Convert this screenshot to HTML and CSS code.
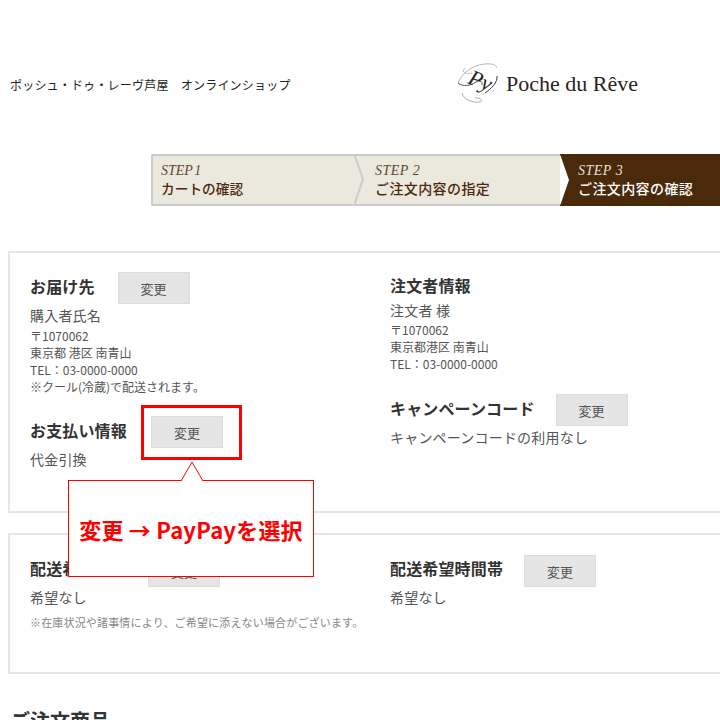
FILE: index.html
```html
<!DOCTYPE html>
<html lang="ja">
<head>
    <meta charset="UTF-8">
    <meta name="viewport" content="width=device-width, initial-scale=1.0">
    <title>ご注文内容の確認</title>
    <link rel="stylesheet" href="styles.css">
</head>
<body>
<div class="page">

    <!-- ヘッダー -->
    <header class="site-header">
        <p class="shop-name">ポッシュ・ドゥ・レーヴ芦屋　オンラインショップ</p>
        <div class="logo">
            <svg class="logo-mark" viewBox="0 0 40 40" width="40" height="40">
                <path d="M0 20 C4 10 14 2 27 1 C35 0 40 3 38 5" fill="none" stroke="#888" stroke-width="0.6"/>
                <path d="M0 20 C5 24 12 23 18 19 C22 17 25 19 24 22" fill="none" stroke="#444" stroke-width="0.9"/>
                <path d="M7 5 C3 9 7 12 14 10" fill="none" stroke="#999" stroke-width="0.6"/>
                <path d="M39 13 C40 19 33 26 27 30" fill="none" stroke="#333" stroke-width="1"/>
                <path d="M4 30 C5 36 14 40 22 39 C26 38 22 34 17 35" fill="none" stroke="#777" stroke-width="0.6"/>
                <text class="logo-letters" x="9" y="20" transform="rotate(22 9 20)">Py</text>
            </svg>
            <span class="logo-text">Poche du Rêve</span>
        </div>
    </header>

    <!-- ステップ -->
    <ol class="steps">
        <li class="step step-first">
            <span class="step-no">STEP 1</span>
            <span class="step-label">カートの確認</span>
            <svg class="step-chevron" viewBox="0 0 10 52" width="10" height="52"><polyline points="0,0 9,25 0,52" fill="none" stroke="#ccc" stroke-width="2"/></svg>
        </li>
        <li class="step step-second">
            <span class="step-no">STEP 2</span>
            <span class="step-label">ご注文内容の指定</span>
        </li>
        <li class="step step-current">
            <span class="step-no">STEP 3</span>
            <span class="step-label">ご注文内容の確認</span>
        </li>
    </ol>

    <!-- お届け先など -->
    <section class="card card-address">
        <div class="col">
            <div class="head-row head-row-ship">
                <h2>お届け先</h2>
                <button class="change-btn">変更</button>
            </div>
            <p class="name">購入者氏名</p>
            <p class="small">〒1070062<br>東京都 港区 南青山<br>TEL：03-0000-0000<br>※クール(冷蔵)で配送されます。</p>
            <div class="head-row head-row-pay">
                <h2>お支払い情報</h2>
                <button class="change-btn">変更</button>
            </div>
            <p class="name">代金引換</p>
        </div>
        <div class="col">
            <div class="head-row head-row-plain">
                <h2>注文者情報</h2>
            </div>
            <p class="name name-tight">注文者 様</p>
            <p class="small">〒1070062<br>東京都港区 南青山<br>TEL：03-0000-0000</p>
            <div class="head-row head-row-campaign">
                <h2>キャンペーンコード</h2>
                <button class="change-btn">変更</button>
            </div>
            <p class="name">キャンペーンコードの利用なし</p>
        </div>
    </section>

    <!-- 配送希望 -->
    <section class="card card-delivery">
        <div class="col">
            <div class="head-row">
                <h2>配送希望日時</h2>
                <button class="change-btn">変更</button>
            </div>
            <p class="name">希望なし</p>
            <p class="note">※在庫状況や諸事情により、ご希望に添えない場合がございます。</p>
        </div>
        <div class="col">
            <div class="head-row">
                <h2>配送希望時間帯</h2>
                <button class="change-btn">変更</button>
            </div>
            <p class="name">希望なし</p>
        </div>
    </section>

    <h2 class="items-title">ご注文商品</h2>

    <!-- 説明の吹き出し -->
    <div class="highlight"></div>
    <div class="callout">
        <svg class="callout-tail" viewBox="0 0 24 20" width="24" height="20"><polyline points="1,20 12,1 23,20" fill="#fff" stroke="#f00" stroke-width="1"/></svg>
        変更 → PayPayを選択
    </div>

</div>
</body>
</html>
```

FILE: styles.css
```css
/* 全体 */
body {
    margin: 0;
    font-family: "Noto Sans CJK JP", "Noto Sans", sans-serif;
    color: #555;
    background: #fff;
}

.page {
    position: relative;
    width: 720px;
    height: 720px;
    overflow: hidden;
}

h2, p, ol {
    margin: 0;
    padding: 0;
}

/* ヘッダー */
.site-header {
    display: flex;
    justify-content: space-between;
    align-items: center;
    height: 70px;
    padding: 50px 82px 0 10px;
}

.shop-name {
    font-size: 12px;
    line-height: 16px;
    letter-spacing: 0.2px;
    color: #222;
    white-space: nowrap;
}

.logo {
    display: flex;
    align-items: center;
    gap: 8px;
    width: 180px;
    margin-bottom: 2px;
}

.logo-mark {
    flex: none;
    margin-top: -2px;
}

.logo-letters {
    font-family: "Liberation Serif", serif;
    font-style: italic;
    font-size: 22px;
    fill: #222;
}

.logo-text {
    font-family: "Liberation Serif", serif;
    font-size: 22px;
    color: #2a2322;
    white-space: nowrap;
}

/* ステップ */
.steps {
    display: flex;
    list-style: none;
    width: 569px;
    height: 52px;
    margin: 34px 0 0 151px;
}

.step {
    position: relative;
    box-sizing: border-box;
    display: flex;
    flex-direction: column;
    justify-content: center;
    height: 52px;
    background: #ebe8de;
    border-top: 2px solid #ccc;
    border-bottom: 2px solid #ccc;
    color: #4b2a0c;
}

.step-first {
    width: 204px;
    padding-left: 8px;
    border-left: 2px solid #ccc;
    border-radius: 2px 0 0 2px;
}

.step-second {
    width: 205px;
    padding-left: 20px;
}

.step-current {
    width: 160px;
    padding-left: 18px;
    background: #4b2a0c;
    border-color: #4b2a0c;
    color: #fff;
    clip-path: polygon(0 0, 100% 0, 100% 100%, 0 100%, 9px 50%);
}

.step-no {
    font-family: "Liberation Serif", serif;
    font-style: italic;
    font-size: 14px;
    line-height: 17px;
    letter-spacing: 0.5px;
    opacity: 0.85;
}

.step-label {
    font-size: 14px;
    line-height: 19px;
    font-weight: 500;
    letter-spacing: 0.4px;
    white-space: nowrap;
}

.step-first .step-no,
.step-first .step-label {
    letter-spacing: 0;
}

.step-first .step-no {
    word-spacing: -2px;
}

.step-first .step-label {
    font-size: 13.7px;
}

.step-chevron {
    position: absolute;
    top: -2px;
    right: -9px;
    z-index: 1;
}

/* カード */
.card {
    box-sizing: border-box;
    display: grid;
    grid-template-columns: 360px 340px;
    width: 760px;
    margin-left: 8px;
    padding: 19px 20px 0;
    border: 2px solid #e5e5e5;
    border-right: 0;
}

.card-address {
    height: 262px;
    margin-top: 45px;
}

.card-delivery {
    height: 141px;
    margin-top: 20px;
    padding-top: 20px;
}

.head-row {
    display: flex;
    align-items: center;
    gap: 24px;
    height: 32px;
}

.head-row h2 {
    margin-bottom: 4px;
    font-size: 16px;
    line-height: 24px;
    font-weight: 700;
    letter-spacing: 0.15px;
    color: #333;
    white-space: nowrap;
}

.card-delivery .head-row {
    gap: 21px;
}

.card-delivery .head-row h2 {
    margin-bottom: 6px;
}

.card-delivery .name {
    margin-top: -2px;
}

.head-row-ship {
    gap: 23px;
}

.head-row-pay {
    margin-top: 21px;
}

.head-row-campaign {
    margin-top: 22px;
    gap: 21px;
}

.head-row-plain {
    height: 30px;
}

.change-btn {
    box-sizing: border-box;
    width: 72px;
    height: 32px;
    padding: 0;
    border: 1px solid #dcdcdc;
    background: #e5e5e5;
    font-family: inherit;
    font-size: 13px;
    color: #555;
}

.name {
    margin-top: -1px;
    font-size: 14px;
    line-height: 24px;
    letter-spacing: 0.2px;
}

.name-tight {
    margin-top: -2px;
    line-height: 21px;
}

.small {
    font-size: 12px;
    line-height: 17px;
}

.note {
    margin-top: 1px;
    font-size: 11px;
    line-height: 24px;
    letter-spacing: 0.17px;
    color: #888;
    white-space: nowrap;
}

.items-title {
    margin: 32px 0 0 10px;
    font-size: 20px;
    line-height: 30px;
    font-weight: 700;
    color: #333;
}

/* 赤枠と吹き出し */
.highlight {
    position: absolute;
    left: 141px;
    top: 405px;
    box-sizing: border-box;
    width: 101px;
    height: 55px;
    border: 3px solid #f00;
}

.callout {
    position: absolute;
    left: 68px;
    top: 480px;
    box-sizing: border-box;
    display: flex;
    align-items: center;
    justify-content: center;
    width: 246px;
    height: 97px;
    border: 1px solid #f00;
    background: #fff;
    font-size: 22px;
    font-weight: 700;
    letter-spacing: 0.2px;
    color: #f00;
    white-space: nowrap;
}

.callout-tail {
    position: absolute;
    left: 111px;
    top: -20px;
}
```
